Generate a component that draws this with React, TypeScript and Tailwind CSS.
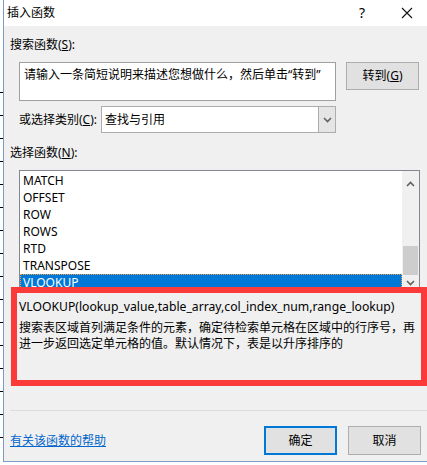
import React from 'react';

const font = '"Noto Sans", "Noto Sans CJK SC", sans-serif';

const items = ['MATCH', 'OFFSET', 'ROW', 'ROWS', 'RTD', 'TRANSPOSE'];

const Chevron = ({ up }: { up?: boolean }) => (
  <svg width="9" height="6" viewBox="0 0 9 6">
    <path d={up ? 'M1 5 L4.5 1.5 L8 5' : 'M1 1 L4.5 4.5 L8 1'} fill="none" stroke="#606060" strokeWidth="1.6" />
  </svg>
);

export default function App() {
  return (
    <div className="relative w-[427px] h-[465px] overflow-hidden bg-white text-[12px] text-black" style={{ fontFamily: font }}>
      <div className="flex h-[462px]">
        {/* excel behind the dialog */}
        <div className="w-[3px] shrink-0 flex flex-col pt-[92px] gap-[22px]">
          {Array.from({ length: 16 }).map((_, i) => (
            <div key={i} className="h-px bg-black" />
          ))}
        </div>

        {/* dialog */}
        <div className="flex-1 min-w-0 overflow-hidden flex flex-col border-l border-b border-[#7a9cc6] bg-[#f0f0f0]">
          {/* title bar */}
          <div className="h-[26px] bg-white flex items-center pl-[3px] pr-[14px] shrink-0">
            <span className="leading-none">插入函数</span>
            <span className="ml-auto text-[14px] leading-none mr-[36px]">?</span>
            <svg width="12" height="12" viewBox="0 0 12 12">
              <path d="M1 1 L11 11 M11 1 L1 11" stroke="#111" strokeWidth="1.1" />
            </svg>
          </div>

          {/* body */}
          <div className="flex flex-col pl-[6px] pr-[6px]">
            <div className="mt-[11px] leading-[16px]">
              搜索函数(<span className="underline">S</span>):
            </div>

            <div className="flex mt-[9px] ml-[9px] gap-[10px] items-start">
              <div className="w-[317px] h-[39px] bg-white border border-[#a0a0a0] px-[4px] pt-[4px] leading-[16px]">
                请输入一条简短说明来描述您想做什么，然后单击“转到”
              </div>
              <button className="w-[73px] h-[28px] bg-[#e1e1e1] border border-[#adadad] leading-none">
                转到(<span className="underline">G</span>)
              </button>
            </div>

            <div className="flex items-center mt-[5px] ml-[9px]">
              <div className="w-[82px] leading-[16px]">
                或选择类别(<span className="underline">C</span>):
              </div>
              <div className="w-[235px] h-[27px] flex border border-[#adadad] bg-white">
                <div className="flex-1 flex items-center pl-[3px]">查找与引用</div>
                <div className="w-[17px] bg-[#e5e5e5] border-l border-[#adadad] flex items-center justify-center">
                  <Chevron />
                </div>
              </div>
            </div>

            <div className="mt-[12px] leading-[16px]">
              选择函数(<span className="underline">N</span>):
            </div>

            {/* function list */}
            <div className="mt-[9px] ml-[9px] w-[401px] h-[121px] flex border border-[#828790] bg-white overflow-hidden">
              <div className="flex-1 flex flex-col pt-[1px]">
                {items.map((it) => (
                  <div key={it} className="h-[17px] leading-[17px] pl-[3px]">{it}</div>
                ))}
                <div className="h-[17px] leading-[15px] pl-[2px] bg-[#0078d7] text-white border border-dotted border-[#f2a04a]">VLOOKUP</div>
              </div>
              <div className="w-[17px] bg-[#f0f0f0] flex flex-col items-center">
                <div className="h-[20px] flex items-center justify-center mt-[3px]"><Chevron up /></div>
                <div className="mt-[52px] w-[15px] h-[30px] bg-[#cdcdcd]" />
                <div className="h-[15px] flex items-center justify-center"><Chevron /></div>
              </div>
            </div>

            {/* description */}
            <div className="mt-[7px] ml-[9px] h-[86px] leading-[16px] whitespace-nowrap">
              <div className="text-[12.2px] mt-[1px]">VLOOKUP(lookup_value,table_array,col_index_num,range_lookup)</div>
              <div className="mt-[5px]">搜索表区域首列满足条件的元素，确定待检索单元格在区域中的行序号，再</div>
              <div>进一步返回选定单元格的值。默认情况下，表是以升序排序的</div>
            </div>

            <div className="mt-[26px] h-px bg-[#dcdcdc] mr-[-6px]" />

            <div className="flex items-center mt-[15px]">
              <a className="text-[#0066cc] underline leading-[16px]">有关该函数的帮助</a>
              <div className="ml-auto flex gap-[11px]">
                <button className="w-[73px] h-[29px] bg-[#e1e1e1] border-2 border-[#0078d7] leading-none">确定</button>
                <button className="w-[73px] h-[29px] bg-[#e1e1e1] border border-[#adadad] leading-none">取消</button>
              </div>
            </div>
          </div>
        </div>
      </div>

      {/* red annotation box */}
      <div className="absolute left-[11px] top-[287px] w-[416px] h-[99px] border-[6px] border-[#fb3a3a]" />
    </div>
  );
}
